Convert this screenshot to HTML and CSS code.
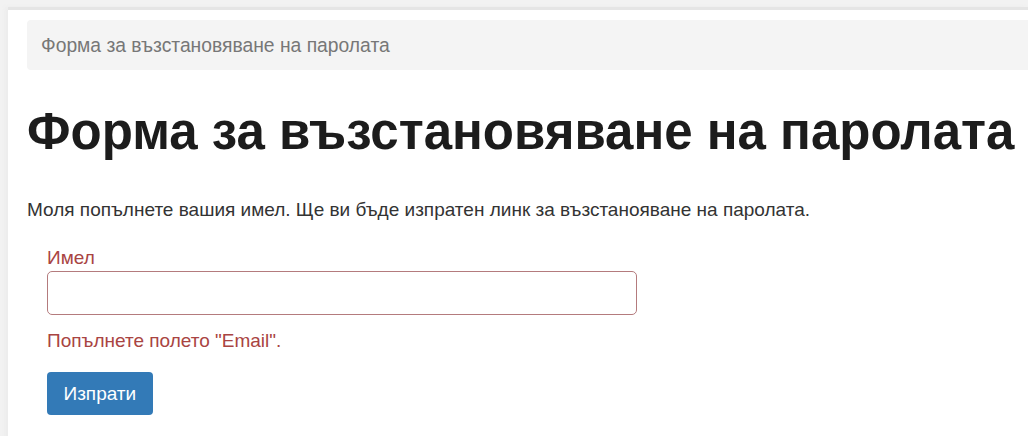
FILE: index.html
```html
<!DOCTYPE html>
<html lang="bg">
<head>
<meta charset="utf-8">
<title>Форма за възстановяване на паролата</title>
<link rel="stylesheet" href="styles.css">
</head>
<body>
<div class="window">
  <main class="page">
    <ol class="breadcrumb">
      <li class="active">Форма за възстановяване на паролата</li>
    </ol>
    <h1 class="title">Форма за възстановяване на паролата</h1>
    <p class="lead-text">Моля попълнете вашия имел. Ще ви бъде изпратен линк за възстанояване на паролата.</p>
    <form class="reset-form">
      <div class="form-group has-error">
        <label class="control-label" for="email">Имел</label>
        <input class="form-control" id="email" type="text">
        <p class="help-block">Попълнете полето "Email".</p>
      </div>
      <button class="btn btn-primary" type="button">Изпрати</button>
    </form>
  </main>
</div>
</body>
</html>
```

FILE: styles.css
```css
html, body {
  margin: 0;
  height: 100%;
}

body {
  background: #f2f2f2;
  font-family: "Liberation Sans", Arial, sans-serif;
  font-size: 19px;
  line-height: 27px;
  color: #333;
  overflow: hidden;
}

.window {
  margin-top: 7px;
  margin-left: 8px;
  border-top: 3px solid #e5e5e5;
  background: #fff;
  height: 100%;
  box-shadow: -3px 0 4px #ececec;
}

.page {
  padding: 10px 0 0 19px;
}

.breadcrumb {
  list-style: none;
  margin: 0;
  padding: 0 14px;
  height: 50px;
  display: flex;
  align-items: center;
  background: #f4f4f4;
  border-radius: 4px 0 0 4px;
  font-size: 19.3px;
  color: #777;
}

.title {
  margin: 34px 0 0 0;
  font-size: 51px;
  font-weight: bold;
  color: #1c1c1c;
  line-height: 56px;
  white-space: nowrap;
}

.lead-text {
  margin: 36px 0 0 0;
  color: #333;
}

.reset-form {
  margin-left: 20px;
  margin-top: 21px;
  width: 590px;
}

.form-group {
  margin-bottom: 18px;
}

.control-label {
  display: block;
}

.has-error .control-label,
.has-error .help-block {
  color: #a94442;
}

.form-control {
  display: block;
  box-sizing: border-box;
  width: 100%;
  height: 44px;
  border: 1px solid #b47b7d;
  border-radius: 5px;
  background: #fff;
  margin: 0;
}

.help-block {
  margin: 12px 0 0 0;
}

.btn {
  font-family: inherit;
  font-size: 19px;
  border: 0;
  border-radius: 4px;
  padding: 0 16.5px;
  height: 43px;
  cursor: pointer;
}

.btn-primary {
  background: #337ab7;
  color: #fff;
}
```
